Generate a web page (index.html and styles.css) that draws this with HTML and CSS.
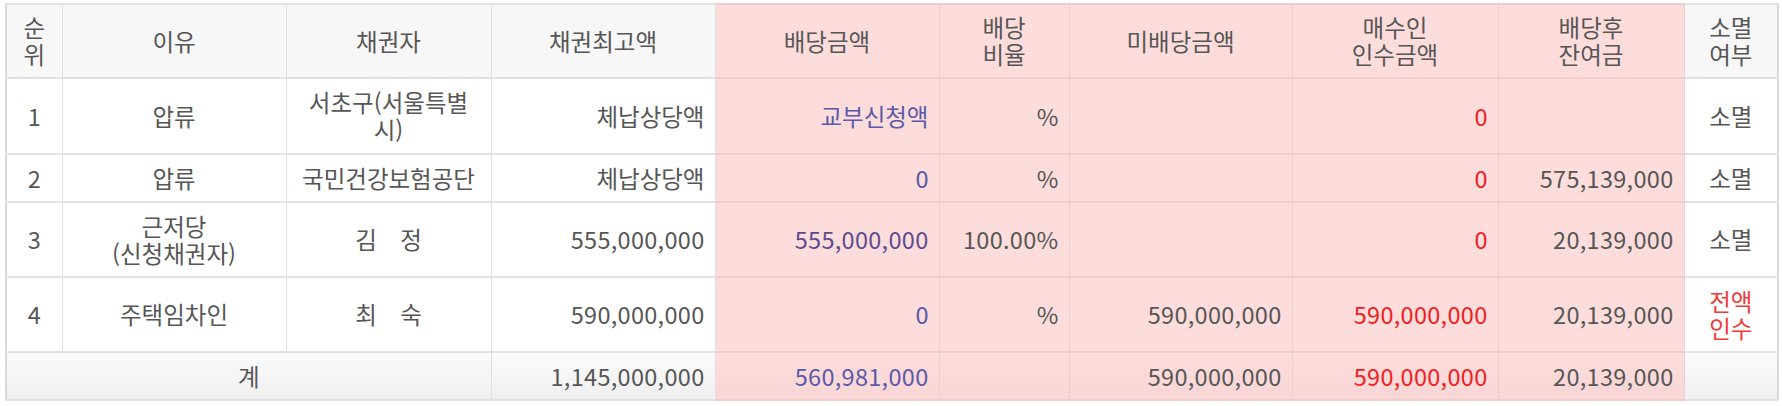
FILE: index.html
```html
<!DOCTYPE html>
<html lang="ko">
<head>
<meta charset="utf-8">
<title>배당표</title>
<link rel="stylesheet" href="styles.css">
</head>
<body>
<table class="dist">
  <colgroup>
    <col class="c-rank"><col class="c-reason"><col class="c-creditor"><col class="c-max">
    <col class="c-pay"><col class="c-rate"><col class="c-unpaid"><col class="c-buyer">
    <col class="c-rest"><col class="c-ext">
  </colgroup>
  <thead>
    <tr class="head">
      <th>순<br>위</th>
      <th>이유</th>
      <th>채권자</th>
      <th>채권최고액</th>
      <th class="pink">배당금액</th>
      <th class="pink">배당<br>비율</th>
      <th class="pink">미배당금액</th>
      <th class="pink">매수인<br>인수금액</th>
      <th class="pink">배당후<br>잔여금</th>
      <th>소멸<br>여부</th>
    </tr>
  </thead>
  <tbody>
    <tr class="r-tall">
      <td class="ctr">1</td>
      <td class="ctr">압류</td>
      <td class="ctr">서초구(서울특별<br>시)</td>
      <td class="num">체납상당액</td>
      <td class="pink num blue">교부신청액</td>
      <td class="pink num">%</td>
      <td class="pink num"></td>
      <td class="pink num red">0</td>
      <td class="pink num"></td>
      <td class="ctr">소멸</td>
    </tr>
    <tr class="r-short">
      <td class="ctr">2</td>
      <td class="ctr">압류</td>
      <td class="ctr">국민건강보험공단</td>
      <td class="num">체납상당액</td>
      <td class="pink num blue">0</td>
      <td class="pink num">%</td>
      <td class="pink num"></td>
      <td class="pink num red">0</td>
      <td class="pink num digits">575,139,000</td>
      <td class="ctr">소멸</td>
    </tr>
    <tr class="r-mid">
      <td class="ctr">3</td>
      <td class="ctr">근저당<br>(신청채권자)</td>
      <td class="ctr">김　정</td>
      <td class="num digits">555,000,000</td>
      <td class="pink num purple digits">555,000,000</td>
      <td class="pink num digits">100.00%</td>
      <td class="pink num"></td>
      <td class="pink num red">0</td>
      <td class="pink num digits">20,139,000</td>
      <td class="ctr">소멸</td>
    </tr>
    <tr class="r-mid">
      <td class="ctr">4</td>
      <td class="ctr">주택임차인</td>
      <td class="ctr">최　숙</td>
      <td class="num digits">590,000,000</td>
      <td class="pink num blue">0</td>
      <td class="pink num">%</td>
      <td class="pink num digits">590,000,000</td>
      <td class="pink num red digits">590,000,000</td>
      <td class="pink num digits">20,139,000</td>
      <td class="ctr red">전액<br>인수</td>
    </tr>
  </tbody>
  <tfoot>
    <tr class="total">
      <td class="ctr" colspan="3">계</td>
      <td class="num digits">1,145,000,000</td>
      <td class="pink num blue digits">560,981,000</td>
      <td class="pink num"></td>
      <td class="pink num digits">590,000,000</td>
      <td class="pink num red digits">590,000,000</td>
      <td class="pink num digits">20,139,000</td>
      <td></td>
    </tr>
  </tfoot>
</table>
</body>
</html>
```

FILE: styles.css
```css
html, body {
  margin: 0;
  padding: 0;
  background: #ffffff;
}

body {
  padding: 3px 0 0 5px;
  font-family: "Noto Sans CJK KR", "Noto Sans", sans-serif;
  font-size: 23.5px;
  color: #565656;
}

.dist {
  width: 1773px;
  table-layout: fixed;
  border-collapse: collapse;
  border: 2px solid #d9d9d9;
}

.c-rank { width: 56px; }
.c-reason { width: 224px; }
.c-creditor { width: 205px; }
.c-max { width: 224px; }
.c-pay { width: 224px; }
.c-rate { width: 130px; }
.c-unpaid { width: 223px; }
.c-buyer { width: 206px; }
.c-rest { width: 186px; }
.c-ext { width: 94px; }

.dist th,
.dist td {
  border-left: 1px solid #e0e0e0;
  border-right: 1px solid #e0e0e0;
  border-top: 2px solid #e2e2e2;
  border-bottom: 2px solid #e2e2e2;
  padding: 0 10px;
  line-height: 27px;
  font-weight: 400;
  vertical-align: middle;
  white-space: nowrap;
}

.dist th {
  background: #f7f7f7;
  text-align: center;
  color: #565656;
}

.dist th:first-child,
.dist td:first-child {
  padding: 0;
}

.head th {
  height: 72px;
}

.r-tall td {
  height: 74px;
}

.r-short td {
  height: 46px;
}

.r-mid td {
  height: 73px;
}

.total td {
  height: 46px;
  background: linear-gradient(#fbfbfb, #efefef);
}

.dist .pink {
  background: #fddcdc;
  border-left-color: #ebcfcf;
  border-right-color: #ebcfcf;
  border-top-color: #f0cccc;
  border-bottom-color: #f0cccc;
}

.total td.pink {
  background: linear-gradient(#fddcdc, #f9d6d6);
}

.ctr {
  text-align: center;
}

.num {
  text-align: right;
}

.digits {
  letter-spacing: 0.3px;
}

.blue {
  color: #5a5aa8;
}

.purple {
  color: #5d4a8e;
}

.red {
  color: #f01e1e;
}

.dist .red.ctr {
  color: #f03a3a;
}
```
